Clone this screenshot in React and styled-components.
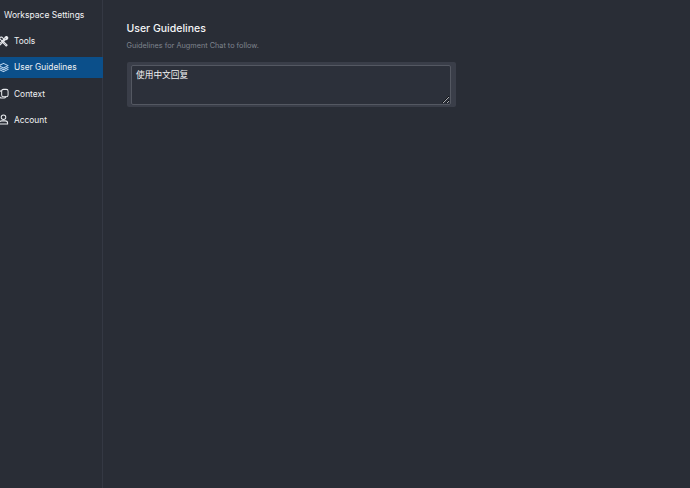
import React from "react";
import styled, { createGlobalStyle } from "styled-components";

const Global = createGlobalStyle`
  html, body { margin: 0; padding: 0; background: #292d36; }
  * { box-sizing: border-box; }
`;

const Page = styled.div`
  width: 690px;
  height: 488px;
  overflow: hidden;
  display: flex;
  background: #292d36;
  color: #f0f1f3;
  font-family: Inter, "Noto Sans CJK SC", sans-serif;
`;

const Sidebar = styled.nav`
  width: 103px;
  flex: none;
  border-right: 1px solid #343843;
  display: flex;
  flex-direction: column;
`;

const SidebarTitle = styled.div`
  font-size: 8.5px;
  line-height: 12px;
  padding: 9px 0 0 4px;
  height: 30.5px;
  color: #f2f3f5;
  white-space: nowrap;
`;

const NavItem = styled.div`
  height: 21px;
  margin: 0 -1px 5.3px 0;
  display: flex;
  align-items: center;
  gap: 5px;
  font-size: 8.4px;
  color: #f0f1f3;
  background: ${(p) => (p.$active ? "#0b4f8a" : "transparent")};
  white-space: nowrap;
  svg { flex: none; }
`;

const Main = styled.main`
  flex: 1;
  padding: 20.5px 0 0 23.5px;
`;

const Heading = styled.h1`
  margin: 0;
  font-size: 10.5px;
  line-height: 15px;
  font-weight: 500;
  color: #f4f5f7;
`;

const Subtitle = styled.p`
  margin: 5px 0 0;
  font-size: 7.3px;
  line-height: 10px;
  color: #7f848e;
`;

const Frame = styled.div`
  margin-top: 11.5px;
  width: 329px;
  height: 45px;
  padding: 3px 4.5px;
  border-radius: 2px;
  background: #3a3e49;
`;

const Area = styled.textarea`
  display: block;
  width: 320px;
  height: 39.5px;
  margin: 0;
  padding: 3px 4px;
  border: 1px solid #545862;
  border-radius: 2px;
  background: #2c303a;
  color: #f0f1f3;
  font-family: Inter, "Noto Sans CJK SC", sans-serif;
  font-size: 8.7px;
  line-height: 12px;
  outline: none;
  resize: vertical;
`;

const Icon = ({ children, $tint }) => (
  <svg width="9" height="11" viewBox="0 0 24 24" fill="none" stroke={$tint || "#e8eaee"} strokeWidth="2.2" strokeLinecap="round" strokeLinejoin="round" preserveAspectRatio="xMaxYMid slice">
    {children}
  </svg>
);

const items = [
  ["Tools", <><path d="M14.7 6.3a4 4 0 0 1 5-5l-3 3 1.5 1.5 3-3a4 4 0 0 1-5 5L7 17l-3 3-2-2 3-3z" /><path d="M4 3l4-1 5 5-4 4-5-5zM11 11l9 9-2 2-9-9" /></>],
  ["User Guidelines", <><path d="M12 3 2 8l10 5 10-5z" /><path d="m2 12 10 5 10-5" /><path d="m2 16 10 5 10-5" /></>, true],
  ["Context", <><rect x="8" y="3" width="14" height="16" rx="4" /><path d="M8 6a5 5 0 0 0-5 5v6a5 5 0 0 0 5 5h5a5 5 0 0 0 4-3" /></>],
  ["Account", <><circle cx="12" cy="7" r="5" /><path d="M3 22v-2a5 5 0 0 1 5-5h8a5 5 0 0 1 5 5v2z" /></>],
];

export default function App() {
  return (
    <Page>
      <Global />
      <Sidebar>
        <SidebarTitle>Workspace Settings</SidebarTitle>
        {items.map(([label, icon, active]) => (
          <NavItem key={label} $active={active}>
            <Icon $tint={active ? "#bcd6f0" : undefined}>{icon}</Icon>
            {label}
          </NavItem>
        ))}
      </Sidebar>
      <Main>
        <Heading>User Guidelines</Heading>
        <Subtitle>Guidelines for Augment Chat to follow.</Subtitle>
        <Frame>
          <Area defaultValue="使用中文回复" />
        </Frame>
      </Main>
    </Page>
  );
}
